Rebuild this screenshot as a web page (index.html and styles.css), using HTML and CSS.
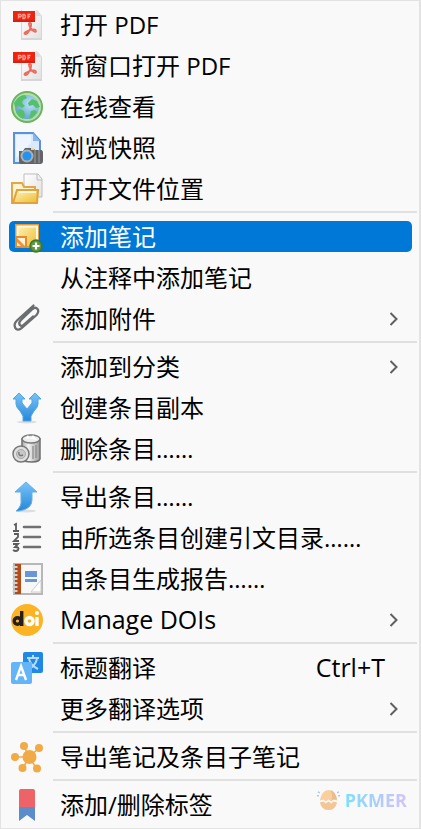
FILE: index.html
```html
<!DOCTYPE html>
<html lang="zh-CN">
<head>
<meta charset="utf-8">
<meta name="viewport" content="width=device-width, initial-scale=1">
<title>条目菜单</title>
<link rel="stylesheet" href="styles.css">
</head>
<body>
<svg class="defs" aria-hidden="true">
  <defs>
    <linearGradient id="page" x1="0" y1="0" x2="1" y2="1"><stop offset="0" stop-color="#fff"/><stop offset="1" stop-color="#e2e2e2"/></linearGradient>
    <linearGradient id="blue" x1="0" y1="0" x2="0" y2="1"><stop offset="0" stop-color="#79c4fa"/><stop offset="1" stop-color="#2687d8"/></linearGradient>
    <linearGradient id="gold" x1="0" y1="0" x2="1" y2="1"><stop offset="0" stop-color="#fff3bd"/><stop offset="1" stop-color="#eebc2c"/></linearGradient>
    <linearGradient id="metal" x1="0" y1="0" x2="1" y2="0"><stop offset="0" stop-color="#aaa"/><stop offset=".35" stop-color="#f5f5f5"/><stop offset="1" stop-color="#999"/></linearGradient>
    <radialGradient id="sea" cx=".6" cy=".4" r=".6"><stop offset="0" stop-color="#b9e4f5"/><stop offset="1" stop-color="#559bcb"/></radialGradient>
    <symbol id="pdf" viewBox="0 0 32 32">
      <path d="M10 1h16l5 6v24H10z" fill="#d6d6d6"/>
      <path d="M11 1h14l5 6v22H11z" fill="url(#page)"/>
      <path d="M25 1v6h5z" fill="#ddd"/>
      <path d="M2 2h22v11H2z" fill="#ee2411"/>
      <path d="M2 11h22v2H2z" fill="#d8200f"/>
      <path d="M7.500 9.500V5.500h2q1.500 1.200 0 2.300h-2M12 5.500v4h1.500q2-2 0-4zM17 9.500v-4h2.500M17 7.500h2" fill="none" stroke="#ff9c90" stroke-width="1.400"/>
      <path d="M19 14c2 0 1 4 0 6s-3 6-5 5 2-3 5-4 6-1 6 1-4 0-6-4-1-4 0-4" fill="none" stroke="#ef6a5c" stroke-width="1.800"/>
    </symbol>
  </defs>
</svg>

<main class="menu" role="menu">
  <div class="group">
    <button class="item" role="menuitem"><svg class="icon"><use href="#pdf"/></svg><span>打开 PDF</span></button>
    <button class="item" role="menuitem"><svg class="icon"><use href="#pdf"/></svg><span>新窗口打开 PDF</span></button>
    <button class="item" role="menuitem">
      <svg class="icon" viewBox="0 0 32 32"><circle cx="16" cy="16" r="15" fill="url(#sea)" stroke="#6cb45c" stroke-width="2"/><circle cx="16" cy="16" r="13" fill="none" stroke="#b6dfa5" stroke-width="2"/><path d="M5 9q4-5 9-5l2 3-4 2-1 3 3 3-3 2-3-2-4 1-1-4zM17 12l4-4 5 2 3 6-4 1-3-3-4 1zM9 18l4 2 1 4-2 4q-5-2-7-7zM20 20l4-1 2 2-5 6-3 1z" fill="#55bf69"/></svg>
      <span>在线查看</span></button>
    <button class="item" role="menuitem">
      <svg class="icon" viewBox="0 0 32 32"><path d="M3 1h19l7 8v22H3z" fill="#d9eaff" stroke="#5b91da" stroke-width="2"/><path d="M5 3h15v8L5 26z" fill="#edf5ff"/><path d="M22 1v8h7z" fill="#8bb6ed"/><path d="M8 19h4l2-3h8l2 2h6q2 0 2 3v8q0 3-3 3H10q-2 0-2-3z" fill="#626466"/><path d="M24 18v13M28 18v13" stroke="#8b8d8e" stroke-width="1.500"/><circle cx="16" cy="24" r="6.500" fill="#aeb0b0"/><circle cx="16" cy="24" r="4.500" fill="#2593ed"/><path d="M20 16h3v2h-3z" fill="#ffd37a"/></svg>
      <span>浏览快照</span></button>
    <button class="item" role="menuitem">
      <svg class="icon" viewBox="0 0 32 32"><path d="M13 1h14l4 5v18H13z" fill="url(#page)" stroke="#bdbdbd"/><path d="M26 1v6h5" fill="#eee" stroke="#bdbdbd"/><path d="M1 30V10h10l2 4h11v16z" fill="#fff5d4" stroke="#e3a845" stroke-width="2"/><path d="M2 30l4-13h21l-1 13z" fill="url(#gold)" stroke="#dfa23d" stroke-width="2"/><path d="M8 19h17" stroke="#fff9d8" stroke-width="2"/></svg>
      <span>打开文件位置</span></button>
  </div>
  <hr>
  <div class="group">
    <button class="item selected" role="menuitem">
      <svg class="icon" viewBox="0 0 32 32"><path d="M5 4h22v22H5z" fill="url(#gold)" stroke="#e99732" stroke-width="2"/><path d="M6.500 15V5.500H26V22" fill="none" stroke="#fffbe9" stroke-width="2"/><path d="M5 16h10v10H5z" fill="#fff0d3" stroke="#e68b2c" stroke-width="2"/><path d="M6 17l9 9h-4l-5-5z" fill="#e99438"/><circle cx="25" cy="25" r="6" fill="#5c963f" stroke="#3e772a" stroke-width="1.500"/><path d="M25 21.500v7M21.500 25h7" stroke="#fff" stroke-width="2.200"/></svg>
      <span>添加笔记</span></button>
    <button class="item" role="menuitem"><i class="icon"></i><span>从注释中添加笔记</span></button>
    <button class="item" role="menuitem" aria-haspopup="menu">
      <svg class="icon" viewBox="0 0 32 32"><path d="M22.500 2.500L6 17.500c-5 5-1 12 4 8l15.500-13.500c4-5 0-9-4-6L10 17c-4 4 0 8 3 4.500l9-8" fill="none" stroke="#6b6e70" stroke-width="2.300" stroke-linecap="round"/></svg>
      <span>添加附件</span><svg class="arrow" viewBox="0 0 10 16"><path d="M1.500 2l6 6-6 6"/></svg></button>
  </div>
  <hr>
  <div class="group">
    <button class="item" role="menuitem" aria-haspopup="menu"><i class="icon"></i><span>添加到分类</span><svg class="arrow" viewBox="0 0 10 16"><path d="M1.500 2l6 6-6 6"/></svg></button>
    <button class="item" role="menuitem">
      <svg class="icon" viewBox="0 0 32 32"><ellipse cx="16" cy="30" rx="10" ry="1.500" fill="#ddd"/><path d="M8 1l6 6h-3v4l5 6 5-6V7h-3l6-6 6 6h-3v5q0 3-4 7l-3 5v5h-8v-5l-3-5q-4-4-4-7V7H2z" fill="url(#blue)" stroke="#54a5df"/></svg>
      <span>创建条目副本</span></button>
    <button class="item" role="menuitem">
      <svg class="icon" viewBox="0 0 32 32"><path d="M11 6v20q1 3 10 3t8-5V6z" fill="url(#metal)" stroke="#707070" stroke-width="1.500"/><ellipse cx="20" cy="6" rx="9" ry="4" fill="#eee" stroke="#777" stroke-width="1.500"/><path d="M14 5l3-3 2 4 3-4 4 5" fill="#fff"/><path d="M22 13v13M25 12v13" stroke="#888" stroke-width="1.200"/><circle cx="10" cy="21" r="8" fill="#e0e0e0" stroke="#777" stroke-width="1.500"/><circle cx="10" cy="21" r="4.500" fill="#c8c8c8" stroke="#aaa"/><path d="M8 19q-1 5 4 3" fill="none" stroke="#777" stroke-width="1.500"/></svg>
      <span>删除条目……</span></button>
  </div>
  <hr>
  <div class="group">
    <button class="item" role="menuitem">
      <svg class="icon" viewBox="0 0 32 32"><ellipse cx="15" cy="30" rx="10" ry="1.500" fill="#ddd"/><path d="M15 1l11 10h-5v8q0 9-13 11H5q6-5 5-11v-8H4z" fill="url(#blue)" stroke="#67afe3"/></svg>
      <span>导出条目……</span></button>
    <button class="item" role="menuitem">
      <svg class="icon" viewBox="0 0 32 32"><path d="M13 5h16M13 15h16M13 25h16" stroke="#707070" stroke-width="2.500" stroke-linecap="round"/><path d="M3 3l2-1v7M2 9h6M3 12h4v3l-4 4h5M2 22h5l-3 3q5 0 3 3-2 2-5 0" fill="none" stroke="#5c5c5c" stroke-width="1.800"/></svg>
      <span>由所选条目创建引文目录……</span></button>
    <button class="item" role="menuitem">
      <svg class="icon" viewBox="0 0 32 32"><path d="M3 1h28v30H3z" fill="#f7f7f7" stroke="#b7b7b7" stroke-width="2"/><path d="M4 1h6v30H4z" fill="#b54b17"/><path d="M1.500 4h5M1.500 8h5M1.500 12h5M1.500 16h5M1.500 20h5M1.500 24h5M1.500 28h5" stroke="#d0d0d0" stroke-width="1.800"/><path d="M14 8h12v6H14zM14 16h12v3H14z" fill="#6896d6"/><path d="M30 17L20 29h10z" fill="#fff" stroke="#ccc"/></svg>
      <span>由条目生成报告……</span></button>
    <button class="item" role="menuitem" aria-haspopup="menu">
      <svg class="icon" viewBox="0 0 32 32"><circle cx="16" cy="16" r="16" fill="#fcb425"/><g fill="none" stroke-width="3.400"><g stroke="#231f20"><circle cx="6.500" cy="17" r="3.300"/><path d="M10.700 7v15"/></g><circle cx="18.500" cy="17" r="3.500" stroke="#fff"/><path d="M26 13v9" stroke="#fff"/></g><circle cx="26" cy="9" r="2" fill="#fff"/></svg>
      <span class="latin">Manage DOIs</span><svg class="arrow" viewBox="0 0 10 16"><path d="M1.500 2l6 6-6 6"/></svg></button>
  </div>
  <hr>
  <div class="group">
    <button class="item" role="menuitem">
      <svg class="icon" viewBox="0 0 32 32"><rect x="12" width="20" height="21" rx="2" fill="#2088e5"/><path d="M16 6h12M22 3v3M18 7q2 7 9 10M26 7q-2 7-8 10" fill="none" stroke="#b9dcfa" stroke-width="2"/><rect y="10" width="21" height="22" rx="2" fill="#63b5f7"/><path d="M5 28l5-14 5 14M7 23h6" fill="none" stroke="#fff" stroke-width="2.400"/></svg>
      <span>标题翻译</span><kbd class="latin">Ctrl+T</kbd></button>
    <button class="item" role="menuitem" aria-haspopup="menu"><i class="icon"></i><span>更多翻译选项</span><svg class="arrow" viewBox="0 0 10 16"><path d="M1.500 2l6 6-6 6"/></svg></button>
  </div>
  <hr>
  <div class="group">
    <button class="item" role="menuitem">
      <svg class="icon" viewBox="0 0 32 32"><path d="M18 16L13 5M18 16L28 7M18 16H4M18 16l-6 11M18 16l8 12" stroke="#f2aa46" stroke-width="1.600"/><g fill="#f2aa46"><circle cx="18.500" cy="16" r="7"/><circle cx="13" cy="5" r="4"/><circle cx="28" cy="7" r="4"/><circle cx="4" cy="16" r="4"/><circle cx="11.500" cy="27" r="4"/><circle cx="26" cy="27.500" r="4"/></g></svg>
      <span>导出笔记及条目子笔记</span></button>
  </div>
  <hr>
  <div class="group">
    <button class="item" role="menuitem">
      <svg class="icon" viewBox="0 0 32 32"><path d="M8 17h16v15l-8-6-8 6z" fill="#5b8dca"/><path d="M8 18V2q0-2 2-2h12q2 0 2 2v16z" fill="#ed6368"/></svg>
      <span>添加/删除标签</span></button>
  </div>
  <div class="brand">
    <svg viewBox="0 0 24 24" aria-hidden="true"><path d="M3 12Q5 1 12 1t9 11l-4-1-2 2-3-2-3 2-2-2z" fill="#f9cf9d"/><path d="M3 14l4-1 2 2 3-2 3 2 2-2 4 1q-2 8-9 8t-9-8z" fill="#f3c696"/><path d="M14 1q5 1 7 10l-4 0-2 1q2-6-1-11z" fill="#e9bd8f"/><path d="M1 3l2 1M0 7h2M21 4l2-1M22 7h2" stroke="#aacce8" stroke-width="1.400"/></svg>
    <span>PKMER</span>
  </div>
</main>
</body>
</html>
```
FILE: styles.css
```css
* {
  box-sizing: border-box;
}

body {
  margin: 0;
  background: #f9f9f9;
  color: #000;
  font-family: "Open Sans", "Noto Sans CJK SC", sans-serif;
  font-size: 24px;
}

.defs {
  position: absolute;
  width: 0;
  height: 0;
}

.menu {
  position: relative;
  min-height: 100vh;
  padding: 3px 2px 2px 8px;
  border: 1px solid #e3e3e3;
  border-right-width: 2px;
}

.group {
  display: flex;
  flex-direction: column;
  padding-right: 5px;
}

.item {
  display: flex;
  align-items: center;
  gap: 17px;
  height: 41px;
  padding: 0 13px 0 2px;
  border: 0;
  background: none;
  color: inherit;
  font: inherit;
  line-height: 31px;
  text-align: left;
  white-space: nowrap;
}

.item.selected {
  height: 31px;
  margin: 5px 0;
  border-radius: 5px;
  background: #0078d7;
  color: #fff;
}

.icon {
  flex: none;
  width: 32px;
  height: 32px;
  margin-top: 1px;
}

.arrow {
  width: 10px;
  height: 16px;
  margin-left: auto;
  fill: none;
  stroke: #606060;
  stroke-width: 2;
}

.latin {
  font-size: 25px;
}

kbd {
  margin-left: auto;
  padding-right: 14px;
  font-family: inherit;
}

hr {
  height: 2px;
  margin: 2px 0 3px 44px;
  border: 0;
  background: #e0e0e0;
}

.brand {
  position: absolute;
  right: 12px;
  bottom: 16px;
  display: flex;
  align-items: center;
  gap: 5px;
  font-size: 18px;
  font-weight: 700;
  line-height: 24px;
}

.brand svg {
  width: 23px;
  height: 23px;
}

.brand span {
  background: linear-gradient(90deg, #7edff9, #a9cdfc 50%, #d3c4fa);
  background-clip: text;
  color: transparent;
}
```
